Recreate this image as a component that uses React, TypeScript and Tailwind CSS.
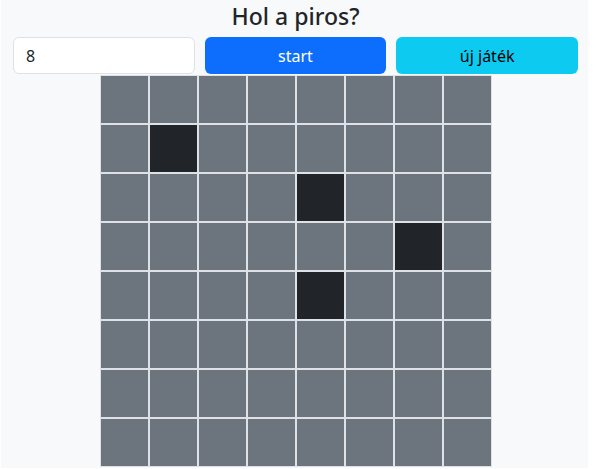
import React from "react";

const dark = new Set(["1-1", "2-4", "3-6", "4-4"]);

export default function App() {
  const rows = Array.from({ length: 8 }, (_, r) => r);
  const cols = Array.from({ length: 8 }, (_, c) => c);
  return (
    <div className="w-[604px] h-[469px] bg-white" style={{ fontFamily: '"Noto Sans", "Open Sans", sans-serif' }}>
      <div className="ml-[1px] w-[587px] h-[468px] bg-[#f8f9fa] pl-[12px] pr-[10px] flex flex-col">
        <h3 className="h-[37px] flex items-center justify-center text-[23px] font-medium text-[#212529] leading-none pb-[4px]">
          Hol a piros?
        </h3>
        <div className="grid grid-cols-3 gap-[10px] h-[37px]">
          <div className="bg-white border border-[#dee2e6] rounded-[6px] flex items-center px-[12px] text-[16px] text-[#212529]">
            8
          </div>
          <button className="bg-[#0d6efd] text-white rounded-[6px] text-[16px]">start</button>
          <button className="bg-[#0dcaf0] text-black rounded-[6px] text-[16px]">új játék</button>
        </div>
        <div className="mx-auto mt-[1px] grid grid-cols-8 w-[392px]">
          {rows.map((r) =>
            cols.map((c) => (
              <div
                key={`${r}-${c}`}
                className={`h-[49px] border border-[#dee2e6] ${dark.has(`${r}-${c}`) ? "bg-[#212529]" : "bg-[#6c757d]"}`}
              />
            ))
          )}
        </div>
      </div>
    </div>
  );
}
